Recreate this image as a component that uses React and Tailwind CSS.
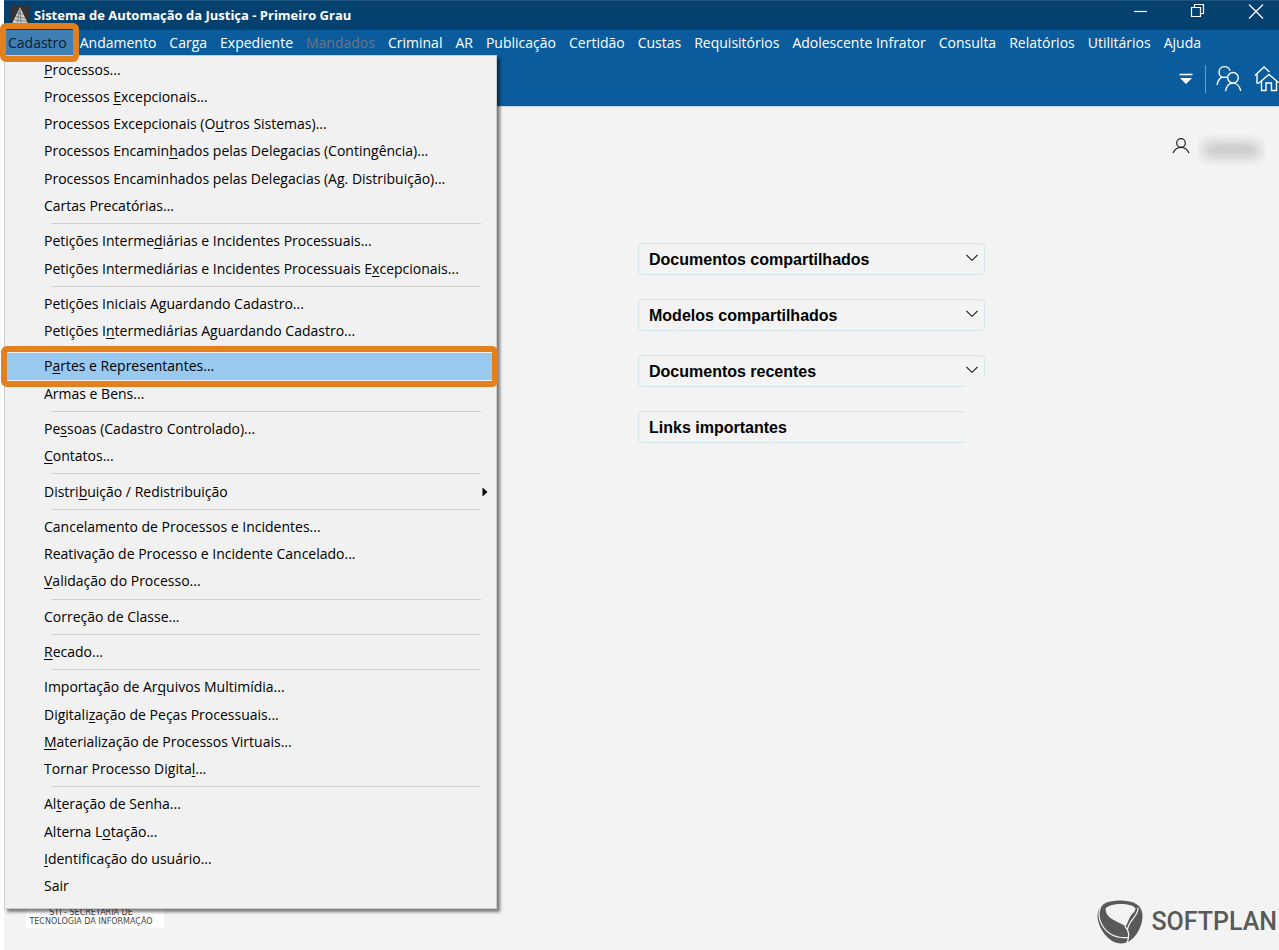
import React from "react";
import clsx from "clsx";

const MENU_BAR = [
  { label: "Cadastro", active: true },
  { label: "Andamento" },
  { label: "Carga" },
  { label: "Expediente" },
  { label: "Mandados", disabled: true },
  { label: "Criminal" },
  { label: "AR" },
  { label: "Publicação" },
  { label: "Certidão" },
  { label: "Custas" },
  { label: "Requisitórios" },
  { label: "Adolescente Infrator" },
  { label: "Consulta" },
  { label: "Relatórios" },
  { label: "Utilitários" },
  { label: "Ajuda" },
];

// "&" marks the mnemonic letter
const CADASTRO_GROUPS = [
  [
    "&Processos...",
    "Processos &Excepcionais...",
    "Processos Excepcionais (O&utros Sistemas)...",
    "Processos Encamin&hados pelas Delegacias (Contingência)...",
    "Processos Encaminhados pelas Dele&gacias (Ag. Distribuição)...",
    "Cartas Precatórias...",
  ],
  [
    "Petições Interme&diárias e Incidentes Processuais...",
    "Petições Intermediárias e Incidentes Processuais E&xcepcionais...",
  ],
  ["Petições Iniciais Aguardando Cadastro...", "Petições I&ntermediárias Aguardando Cadastro..."],
  ["P&artes e Representantes...", "Armas e Bens..."],
  ["Pe&ssoas (Cadastro Controlado)...", "&Contatos..."],
  ["Distri&buição / Redistribuição"],
  [
    "Cancelamento de Processos e Incidentes...",
    "Reativação de Processo e Incidente Cancelado...",
    "&Validação do Processo...",
  ],
  ["Correção de Classe..."],
  ["&Recado..."],
  [
    "Importação de Ar&quivos Multimídia...",
    "Digitali&zação de Peças Processuais...",
    "&Materialização de Processos Virtuais...",
    "Tornar Processo Digita&l...",
  ],
  ["Al&teração de Senha...", "Alterna L&otação...", "&Identificação do usuário...", "Sair"],
];

const SELECTED_ITEM = "P&artes e Representantes...";
const SUBMENU_ITEM = "Distri&buição / Redistribuição";

function Mnemonic({ text }) {
  const at = text.indexOf("&");
  if (at < 0) return text;
  return (
    <>
      {text.slice(0, at)}
      <span className="underline underline-offset-2">{text[at + 1]}</span>
      {text.slice(at + 2)}
    </>
  );
}

function AppIcon() {
  return (
    <svg viewBox="0 0 20 21" className="w-5 h-5" aria-hidden="true">
      <rect width="20" height="21" fill="#333333" />
      <path d="M10 1 L18 17.500 L13 19.500 L2 17.500 Z" fill="#d0d0d0" />
      <path
        d="M10 1 L11 19.500 M9.500 4 L7 19 M7 7 L14 9 M5 11 L16 13 M3.500 14.500 L17 16"
        stroke="#333333"
        strokeWidth="0.5"
        fill="none"
      />
    </svg>
  );
}

function TitleBar() {
  return (
    <header className="flex h-[30px] items-center bg-[#05416f] pl-1.5 pr-3.5 border-t border-[#1d5580] text-white">
      <AppIcon />
      <h1 className="ml-1 flex-1 text-[13px] font-bold">
        Sistema de Automação da Justiça - Primeiro Grau
      </h1>
      <div className="flex gap-10 pb-2.5">
        <button aria-label="Minimizar">
          <svg viewBox="0 0 18 18" className="size-[18px]" fill="none" stroke="currentColor" strokeWidth="1.200">
            <path d="M3 9.500h13" />
          </svg>
        </button>
        <button aria-label="Restaurar">
          <svg viewBox="0 0 18 18" className="size-[18px]" fill="none" stroke="currentColor" strokeWidth="1.200">
            <path d="M2.500 5.500h9v9h-9zM5.500 5.500v-3h9v9h-3" />
          </svg>
        </button>
        <button aria-label="Fechar">
          <svg viewBox="0 0 18 18" className="size-[18px]" fill="none" stroke="currentColor" strokeWidth="1.200">
            <path d="M2 2.500l14 14M16 2.500l-14 14" />
          </svg>
        </button>
      </div>
    </header>
  );
}

function CadastroMenu() {
  return (
    <div
      role="menu"
      aria-label="Cadastro"
      className="absolute top-[55px] bottom-[41px] left-1 z-10 flex w-[493px] flex-col border border-[#cccccc] bg-[#f1f1f1] pb-2 shadow-[3px_3px_3px_rgba(0,0,0,0.5)]"
    >
      {CADASTRO_GROUPS.map((group, index) => (
        <React.Fragment key={group[0]}>
          {index > 0 && (
            <div role="separator" className="flex h-2 shrink-0 items-center pl-[46px] pr-[15px]">
              <div className="h-px w-full bg-[#cfcfcf]" />
            </div>
          )}
          {group.map((item) => (
            <button
              key={item}
              role="menuitem"
              className={clsx(
                "relative flex flex-1 items-center justify-between pl-[39px] pr-2 text-left text-black",
                item === SELECTED_ITEM && "bg-[#99c9ef]"
              )}
            >
              <span>
                <Mnemonic text={item} />
              </span>
              {item === SUBMENU_ITEM && (
                <svg viewBox="0 0 6 10" className="h-2.5 w-1.5" aria-hidden="true">
                  <path d="M0.500 0.500 L5.500 5 L0.500 9.500 Z" fill="#000000" />
                </svg>
              )}
              {item === SELECTED_ITEM && (
                <span className="absolute -inset-y-[7px] -left-1 -right-0.5 rounded-md border-[6px] border-[#e37f1c]" />
              )}
            </button>
          ))}
        </React.Fragment>
      ))}
    </div>
  );
}

function MenuBar() {
  return (
    <nav className="flex h-[25px] items-center gap-[13px] bg-[#0b5c9d] pl-1 text-white">
      {MENU_BAR.map(({ label, active, disabled }) => (
        <button
          key={label}
          disabled={disabled}
          className={clsx(
            "relative whitespace-nowrap",
            active && "-ml-1 -mr-2 h-full bg-[#3f7fb3] pl-1 pr-2 text-[#0d1c2b]",
            disabled && "text-[#6b7580]"
          )}
        >
          {label}
          {active && (
            <span className="absolute -inset-x-1 -inset-y-[7px] z-20 rounded-md border-[6px] border-[#e37f1c]" />
          )}
        </button>
      ))}
    </nav>
  );
}

function Toolbar() {
  return (
    <div className="flex h-[51px] items-center justify-end bg-[#0b5c9d] pb-1 text-white">
      <button aria-label="Mais opções" className="mr-3">
        <svg viewBox="0 0 14 12" className="h-3 w-3.5">
          <path d="M0.500 1.500h13" stroke="currentColor" strokeWidth="1.600" />
          <path d="M1 5h12L7 11z" fill="currentColor" />
        </svg>
      </button>
      <div className="mr-2.5 h-7 w-px bg-[#8f9396]" />
      <button aria-label="Usuários" className="mr-3">
        <svg viewBox="0 0 26 28" className="h-7 w-[26px]" fill="none" stroke="currentColor" strokeWidth="1.400">
          <path d="M5.500 12.300c-1.800-1.300-2.500-3-2.500-5.100a5.600 5.600 0 0 1 11-1.500" />
          <path d="M1 20c.6-3.700 2.200-6.200 4.500-7.700h5.500" />
          <circle cx="17" cy="12.800" r="5.300" />
          <path d="M9.500 26c.8-4.200 3.500-7.900 7.500-7.900s6.900 3.700 7.700 7.900" />
        </svg>
      </button>
      <button aria-label="Início">
        <svg viewBox="0 0 25 28" className="h-7 w-[25px]" fill="none" stroke="currentColor" strokeWidth="1.400">
          <path d="M1 10.500L10 2l5.500 5M3 9v9h2.500" />
          <path d="M5.500 17.500L15 9.500l9.500 8M7.500 16v9.500H12V18h5.500v7.500H22.500V16" />
        </svg>
      </button>
    </div>
  );
}

function UserBadge() {
  return (
    <div className="flex items-center justify-end gap-2 pr-3.5">
      <svg viewBox="0 0 18 18" className="mb-2 size-[18px]" fill="none" stroke="#222222" strokeWidth="1.200" aria-hidden="true">
        <circle cx="9" cy="6" r="4.300" />
        <path d="M1 16c1.500-3.400 4.300-5.700 8-5.700s6.500 2.300 8 5.700" />
      </svg>
      <div className="h-8 w-[67px] overflow-hidden px-1 py-2">
        <div className="h-full rounded-full bg-[#c8c8c8] blur-[6px]" />
      </div>
    </div>
  );
}

const PANELS = [
  "Documentos compartilhados",
  "Modelos compartilhados",
  "Documentos recentes",
  "Links importantes",
];

function SharedPanels() {
  return (
    <section className="relative mt-[77px] ml-[634px] flex w-[347px] flex-col gap-6">
      {PANELS.map((title) => (
        <button
          key={title}
          className="flex h-8 items-center justify-between rounded border border-[#d3e8ea] pl-2.5 pr-1.5 pt-px font-['Liberation_Sans',Arial,sans-serif] text-base font-bold text-black"
        >
          {title}
          <svg viewBox="0 0 12 8" className="mb-1 h-2 w-3" fill="none" stroke="#333333" strokeWidth="1.200" aria-hidden="true">
            <path d="M0.500 1L6 6.500 11.500 1" />
          </svg>
        </button>
      ))}
      {/* blank strip that hides the end of the last two panels */}
      <div className="absolute right-0 bottom-0 h-[66px] w-5 bg-[#f3f3f3]" />
    </section>
  );
}

function SoftplanLogo() {
  return (
    <div className="flex items-center gap-2 text-[#58595b]">
      <svg viewBox="0 0 46 44" className="h-11 w-[46px]" aria-hidden="true">
        <path
          d="M0.500 16C0.500 5 9 0.500 23 0.500S45.500 5 45.500 16C45.500 27 37 43.500 24 43.500S0.500 27 0.500 16z"
          fill="currentColor"
        />
        {/* opening */}
        <path d="M8.500 9C10 5.500 17 4 24 4s13 1.500 14.500 4.500c0 3-3 4.500-5.500 8.500-1.500 3-2.500 6.500-4.500 9.500C23 21.500 9 20 8.500 9z" fill="#f3f3f3" />
        {/* ribbon edges */}
        <path
          d="M7 2.500C1 8 .5 17 5 25c5 8.500 14 13.500 26 12.500M41 7.500c1 8-8 11-10.500 21.500M28 26.500c4 4 5 10 1.500 17"
          fill="none"
          stroke="#f3f3f3"
          strokeWidth="1.200"
        />
      </svg>
      <span className="font-[Roboto,sans-serif] text-[25px] leading-8 font-medium">SOFTPLAN</span>
    </div>
  );
}

export default function App() {
  return (
    <div className="relative flex min-h-screen flex-col overflow-hidden bg-white pl-1 font-['Open_Sans','Noto_Sans',sans-serif] text-sm">
      <TitleBar />
      <MenuBar />
      <Toolbar />
      <CadastroMenu />

      <main className="flex flex-1 flex-col border-t border-[#c3d6e6] bg-[#f3f3f3] pt-[27px]">
        <UserBadge />
        <SharedPanels />

        <footer className="mt-auto flex items-end justify-between pl-[22px] pr-0.5 pb-1.5">
          <p className="mb-4 w-[138px] bg-white pt-4 pr-2 pb-0.5 text-center font-['DejaVu_Sans',sans-serif] text-[8px] leading-[9px] whitespace-nowrap text-[#444444]">
            STI - SECRETARIA DE
            <br />
            TECNOLOGIA DA INFORMAÇÃO
          </p>
          <SoftplanLogo />
        </footer>
      </main>
    </div>
  );
}
